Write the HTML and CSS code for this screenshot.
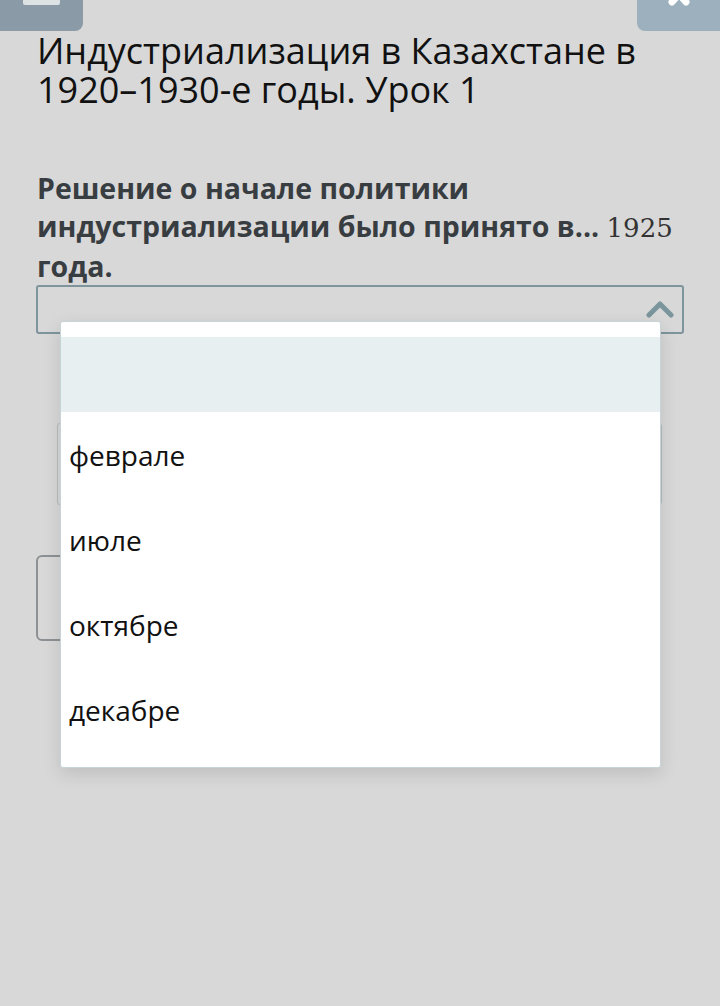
FILE: index.html
```html
<!DOCTYPE html>
<html lang="ru">
<head>
    <meta charset="UTF-8">
    <meta name="viewport" content="width=device-width, initial-scale=1.0">
    <title>Индустриализация в Казахстане</title>
    <link rel="stylesheet" href="styles.css">
</head>
<body>

    <div class="top-bar">
        <div class="corner-btn menu-btn"><span class="menu-line"></span></div>
        <div class="corner-btn close-btn">
            <svg viewBox="0 0 30 8"><path d="M15 -6 L8 2 M15 -6 L22 2" fill="none" stroke="#fff" stroke-width="7" stroke-linecap="round"></path></svg>
        </div>
    </div>

    <div class="content">
        <h1 class="lesson-title">Индустриализация в Казахстане в 1920–1930-е годы. Урок 1</h1>

        <p class="question">Решение о начале политики индустриализации было принято в... <span class="math">1925</span> года.</p>

        <div class="select-wrap">
            <div class="select-box">
                <svg class="chevron" viewBox="0 0 28 18"><path d="M3 15 L14 4 L25 15" fill="none" stroke-width="5" stroke-linecap="round" stroke-linejoin="round"></path></svg>
            </div>

            <ul class="dropdown">
                <li class="option highlighted"></li>
                <li class="option">феврале</li>
                <li class="option">июле</li>
                <li class="option">октябре</li>
                <li class="option">декабре</li>
            </ul>
        </div>

        <div class="answer-field"></div>
        <div class="check-btn"></div>
    </div>

</body>
</html>
```

FILE: styles.css
```css
:root {
    --bg: #d8d8d8;
    --slate: #8a9ba7;
    --slate-light: #9cb1bd;
    --border: #7e959b;
    --text-dark: #111111;
    --text-question: #383d42;
}

body {
    background-color: var(--bg);
    font-family: 'Open Sans', 'Noto Sans', sans-serif;
    margin: 0;
    min-height: 1006px;
}

.top-bar { display: flex; justify-content: space-between; height: 31px; }

.corner-btn { width: 83px; height: 31px; }
.menu-btn { background-color: var(--slate); border-bottom-right-radius: 8px; display: flex; justify-content: center; }
.menu-line { display: block; width: 37px; height: 5px; background-color: #dde2e5; border-radius: 0 0 2px 2px; }
.close-btn { background-color: var(--slate-light); border-bottom-left-radius: 8px; display: flex; justify-content: center; }
.close-btn svg { width: 30px; height: 8px; }

.content { padding: 0 36px; }

.lesson-title {
    font-weight: 400;
    font-size: 36px;
    line-height: 39px;
    color: var(--text-dark);
    margin: 0 0 0 1px;
}

.question {
    font-weight: 700;
    font-size: 28.5px;
    line-height: 38px;
    color: var(--text-question);
    margin: 60px 0 0 1px;
}

.math { font-family: 'DejaVu Serif', 'Liberation Serif', serif; font-weight: 400; font-size: 26px; color: #333; }

.select-wrap { position: relative; }

.select-box {
    height: 45px;
    border: 2px solid var(--border);
    border-radius: 3px;
    display: flex;
    justify-content: flex-end;
    align-items: flex-start;
    padding-right: 8px;
}

.chevron { width: 28px; height: 18px; margin-top: 13px; stroke: #7a959c; }

.dropdown {
    position: absolute;
    top: 36px;
    left: 24px;
    width: 599px;
    margin: 0;
    padding: 15px 0;
    list-style: none;
    background-color: #ffffff;
    border: 1px solid #c6d3d7;
    border-radius: 3px;
    box-shadow: 0 6px 18px rgba(0, 0, 0, 0.12);
    z-index: 10;
}

.option {
    height: 85px;
    display: flex;
    align-items: center;
    padding-left: 8px;
    font-size: 28px;
    color: var(--text-dark);
}

.option.highlighted { height: 75px; background-color: #e8eff1; }

.answer-field {
    margin: 89px 22px 0 21px;
    height: 80px;
    border: 1px solid #b8bcbf;
    border-radius: 3px;
}

.check-btn {
    margin-top: 50px;
    width: 200px;
    height: 82px;
    border: 2px solid #8d9194;
    border-radius: 6px;
}
```
